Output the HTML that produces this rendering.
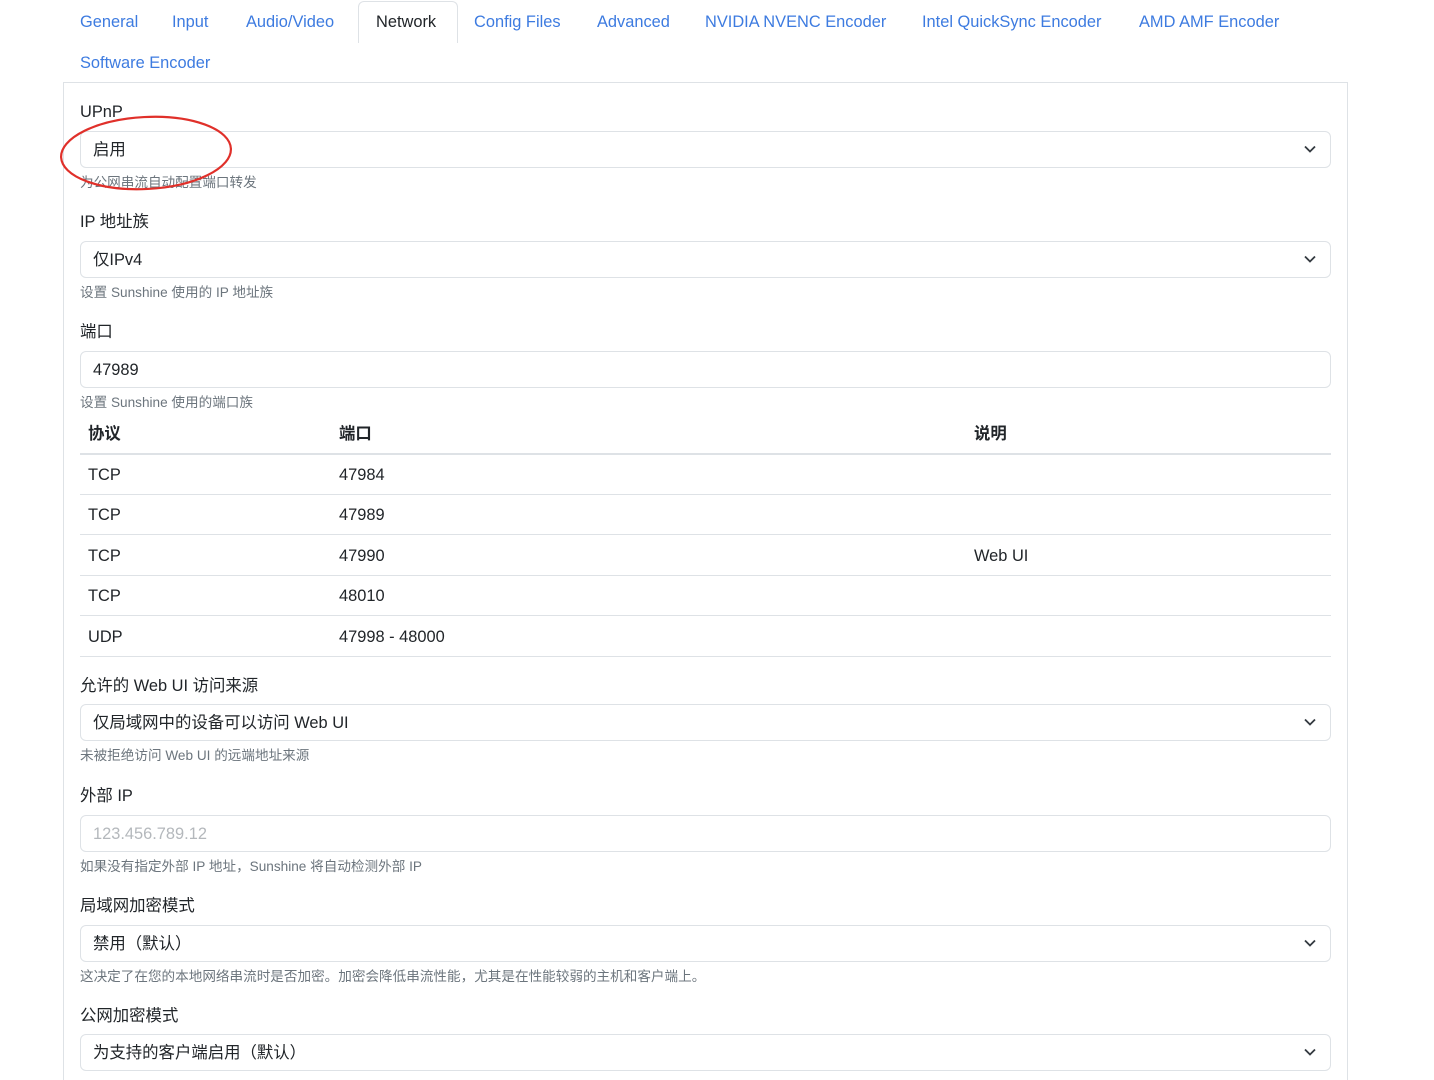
<!DOCTYPE html>
<html><head><meta charset="utf-8"><style>
*{box-sizing:border-box;margin:0;padding:0}
html,body{width:1434px;height:1080px;overflow:hidden}
body{background:#fff;position:relative;font-family:"Liberation Sans","Noto Sans CJK SC",sans-serif;color:#212529;font-size:16.4px}
.t{position:absolute;white-space:nowrap;line-height:20px}
.tab{color:#3d7be0}
.help{font-size:13.6px;color:#6c757d;line-height:16px}
.inp{position:absolute;left:80px;width:1251px;height:37px;border:1px solid #dee2e6;border-radius:6px;padding-left:12px;line-height:37px}
.inp svg{position:absolute;right:14px;top:13px}
.hl{position:absolute;left:80px;width:1251px;height:1px;background:#dee2e6}
</style></head><body>
<div style="position:absolute;left:358px;top:1px;width:100px;height:42px;border:1px solid #dee2e6;border-bottom:none;border-radius:6px 6px 0 0;background:#fff"></div>
<div class="t tab" style="left:80px;top:12px">General</div>
<div class="t tab" style="left:172px;top:12px">Input</div>
<div class="t tab" style="left:246px;top:12px">Audio/Video</div>
<div class="t" style="left:376px;top:12px;color:#212529">Network</div>
<div class="t tab" style="left:474px;top:12px">Config Files</div>
<div class="t tab" style="left:597px;top:12px">Advanced</div>
<div class="t tab" style="left:705px;top:12px">NVIDIA NVENC Encoder</div>
<div class="t tab" style="left:922px;top:12px">Intel QuickSync Encoder</div>
<div class="t tab" style="left:1139px;top:12px">AMD AMF Encoder</div>
<div class="t tab" style="left:80px;top:53px">Software Encoder</div>
<div style="position:absolute;left:63px;top:82px;width:1285px;height:998px;border:1px solid #dee2e6;border-bottom:none"></div>

<div class="t" style="left:80px;top:102px">UPnP</div>
<div class="inp" style="top:131px">启用<svg width="12" height="8" viewBox="0 0 12 8"><path d="M1 1.5l5 5 5-5" fill="none" stroke="#343a40" stroke-width="1.8"/></svg></div>
<div class="t help" style="left:80px;top:175px">为公网串流自动配置端口转发</div>

<div class="t" style="left:80px;top:212px">IP 地址族</div>
<div class="inp" style="top:241px">仅IPv4<svg width="12" height="8" viewBox="0 0 12 8"><path d="M1 1.5l5 5 5-5" fill="none" stroke="#343a40" stroke-width="1.8"/></svg></div>
<div class="t help" style="left:80px;top:285px">设置 Sunshine 使用的 IP 地址族</div>

<div class="t" style="left:80px;top:322px">端口</div>
<div class="inp" style="top:351px">47989</div>
<div class="t help" style="left:80px;top:395px">设置 Sunshine 使用的端口族</div>

<div class="t" style="left:88px;top:424px;font-weight:bold">协议</div>
<div class="t" style="left:339px;top:424px;font-weight:bold">端口</div>
<div class="t" style="left:974px;top:424px;font-weight:bold">说明</div>
<div class="hl" style="top:453px;height:2px"></div>
<div class="t" style="left:88px;top:465px">TCP</div><div class="t" style="left:339px;top:465px">47984</div>
<div class="hl" style="top:494px"></div>
<div class="t" style="left:88px;top:505px">TCP</div><div class="t" style="left:339px;top:505px">47989</div>
<div class="hl" style="top:534px"></div>
<div class="t" style="left:88px;top:546px">TCP</div><div class="t" style="left:339px;top:546px">47990</div><div class="t" style="left:974px;top:546px">Web UI</div>
<div class="hl" style="top:575px"></div>
<div class="t" style="left:88px;top:586px">TCP</div><div class="t" style="left:339px;top:586px">48010</div>
<div class="hl" style="top:615px"></div>
<div class="t" style="left:88px;top:627px">UDP</div><div class="t" style="left:339px;top:627px">47998 - 48000</div>
<div class="hl" style="top:656px"></div>

<div class="t" style="left:80px;top:676px">允许的 Web UI 访问来源</div>
<div class="inp" style="top:704px">仅局域网中的设备可以访问 Web UI<svg width="12" height="8" viewBox="0 0 12 8"><path d="M1 1.5l5 5 5-5" fill="none" stroke="#343a40" stroke-width="1.8"/></svg></div>
<div class="t help" style="left:80px;top:748px">未被拒绝访问 Web UI 的远端地址来源</div>

<div class="t" style="left:80px;top:786px">外部 IP</div>
<div class="inp" style="top:815px;color:#b4b8bc">123.456.789.12</div>
<div class="t help" style="left:80px;top:859px">如果没有指定外部 IP 地址，Sunshine 将自动检测外部 IP</div>

<div class="t" style="left:80px;top:896px">局域网加密模式</div>
<div class="inp" style="top:925px">禁用（默认）<svg width="12" height="8" viewBox="0 0 12 8"><path d="M1 1.5l5 5 5-5" fill="none" stroke="#343a40" stroke-width="1.8"/></svg></div>
<div class="t help" style="left:80px;top:969px">这决定了在您的本地网络串流时是否加密。加密会降低串流性能，尤其是在性能较弱的主机和客户端上。</div>

<div class="t" style="left:80px;top:1006px">公网加密模式</div>
<div class="inp" style="top:1034px">为支持的客户端启用（默认）<svg width="12" height="8" viewBox="0 0 12 8"><path d="M1 1.5l5 5 5-5" fill="none" stroke="#343a40" stroke-width="1.8"/></svg></div>

<svg style="position:absolute;left:0;top:0" width="300" height="220"><ellipse cx="146" cy="153" rx="85" ry="36" fill="none" stroke="#e0302a" stroke-width="2.2" transform="rotate(-3 146 153)"/></svg>
</body></html>
